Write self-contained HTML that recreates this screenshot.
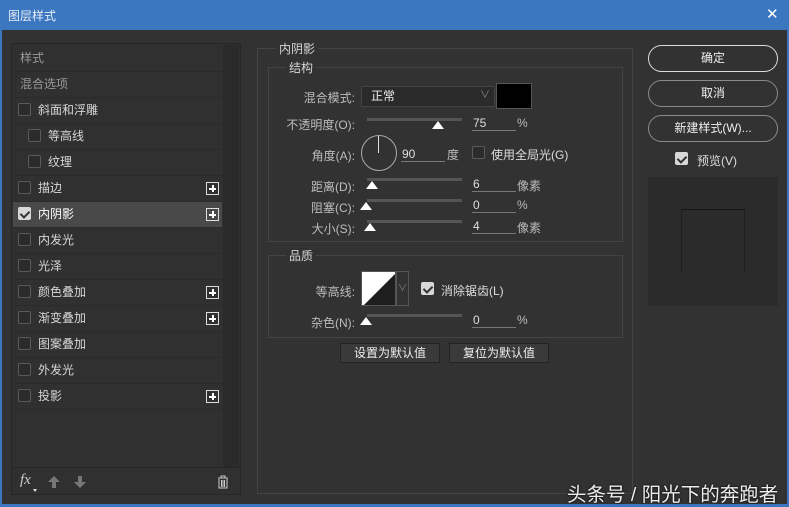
<!DOCTYPE html>
<html><head><meta charset="utf-8"><style>
*{margin:0;padding:0;box-sizing:border-box}
body{width:789px;height:507px;overflow:hidden;background:#3b76c0;font-family:"Liberation Sans","Noto Sans CJK SC",sans-serif;font-size:12px;color:#d6d6d6;position:relative}
.a{position:absolute}
#win{left:2px;top:30px;width:785px;height:474px;background:#323232}
.row{position:absolute;left:13px;width:209px;height:26px;border-bottom:1px solid #2a2a2a;line-height:25px}
.cb{position:absolute;width:13px;height:13px;border:1px solid #5a5a5a;background:#2b2b2b;border-radius:2px}
.cbk{background:#d8d8d8;border-color:#d8d8d8}
.cbk:after{content:"";position:absolute;left:3px;top:1px;width:4px;height:7px;border:solid #333;border-width:0 2px 2px 0;transform:rotate(45deg)}
.plus{position:absolute;left:193px;top:6px;width:13px;height:13px;border:1px solid #ddd}
.plus:before{content:"";position:absolute;left:2px;top:5px;width:7px;height:1px;background:#fff;border-top:1px solid #fff}
.plus:after{content:"";position:absolute;left:5px;top:2px;width:1px;height:7px;background:#fff;border-left:1px solid #fff}
.grp{position:absolute;border:1px solid #444}
.lbl{position:absolute;text-align:right;color:#bdbdbd}
.track{position:absolute;height:3px;background:#555}
.thumb{position:absolute;width:0;height:0;border-left:6px solid transparent;border-right:6px solid transparent;border-bottom:8px solid #fff}
.inp{position:absolute;width:44px;border-bottom:1px solid #777;color:#ddd;padding-left:1px;height:15px;line-height:14px}
.btn{position:absolute;border:1px solid #8a8a8a;border-radius:14px;text-align:center;color:#eee;line-height:25px}
.sbtn{position:absolute;height:20px;background:#3a3a3a;border:1px solid #222;text-align:center;color:#eee;line-height:18px}
</style></head><body>
<div class="a" style="left:8px;top:7px;color:#e8eef8;font-size:12px">图层样式</div>
<div class="a" style="left:766px;top:5px;color:#fff;font-size:15px">✕</div>
<div id="win" class="a"></div>
<!-- left panel -->
<div class="a" style="left:11px;top:43px;width:230px;height:452px;border:1px solid #262626;background:#303030"></div>
<div class="a" style="left:223px;top:45px;width:16px;height:422px;background:#2a2a2a"></div>
<div class="row" style="top:46px;color:#999"><span style="margin-left:7px">样式</span></div>
<div class="row" style="top:72px;color:#999"><span style="margin-left:7px">混合选项</span></div>
<div class="row" style="top:98px"><div class="cb" style="left:5px;top:5px"></div><span style="margin-left:25px">斜面和浮雕</span></div>
<div class="row" style="top:124px"><div class="cb" style="left:15px;top:5px"></div><span style="margin-left:35px">等高线</span></div>
<div class="row" style="top:150px"><div class="cb" style="left:15px;top:5px"></div><span style="margin-left:35px">纹理</span></div>
<div class="row" style="top:176px"><div class="cb" style="left:5px;top:5px"></div><span style="margin-left:25px">描边</span><div class="plus"></div></div>
<div class="row" style="top:202px;background:#494949"><div class="cb cbk" style="left:5px;top:5px"></div><span style="margin-left:25px;color:#fff">内阴影</span><div class="plus"></div></div>
<div class="row" style="top:228px"><div class="cb" style="left:5px;top:5px"></div><span style="margin-left:25px">内发光</span></div>
<div class="row" style="top:254px"><div class="cb" style="left:5px;top:5px"></div><span style="margin-left:25px">光泽</span></div>
<div class="row" style="top:280px"><div class="cb" style="left:5px;top:5px"></div><span style="margin-left:25px">颜色叠加</span><div class="plus"></div></div>
<div class="row" style="top:306px"><div class="cb" style="left:5px;top:5px"></div><span style="margin-left:25px">渐变叠加</span><div class="plus"></div></div>
<div class="row" style="top:332px"><div class="cb" style="left:5px;top:5px"></div><span style="margin-left:25px">图案叠加</span></div>
<div class="row" style="top:358px"><div class="cb" style="left:5px;top:5px"></div><span style="margin-left:25px">外发光</span></div>
<div class="row" style="top:384px"><div class="cb" style="left:5px;top:5px"></div><span style="margin-left:25px">投影</span><div class="plus"></div></div>
<div class="a" style="left:12px;top:467px;width:228px;height:1px;background:#262626"></div>
<div class="a" style="left:20px;top:472px;font-style:italic;font-family:'Liberation Serif',serif;font-size:15px;color:#ccc">fx</div>
<div class="a" style="left:33px;top:489px;border-left:2px solid transparent;border-right:2px solid transparent;border-top:3px solid #ddd"></div>
<svg class="a" style="left:47px;top:475px" width="14" height="14"><path d="M7 1L13 7H9V13H5V7H1Z" fill="#777"/></svg>
<svg class="a" style="left:73px;top:475px" width="14" height="14"><path d="M7 13L13 7H9V1H5V7H1Z" fill="#777"/></svg>
<svg class="a" style="left:217px;top:475px" width="12" height="14"><path d="M1 3H11M4 3V1H8V3M2 4V13H10V4M4.5 5V12M6 5V12M7.5 5V12" stroke="#ccc" fill="none"/></svg>
<!-- middle -->
<div class="grp" style="left:257px;top:48px;width:376px;height:446px"></div>
<div class="a" style="left:276px;top:40px;background:#323232;padding:0 3px">内阴影</div>
<div class="grp" style="left:268px;top:67px;width:355px;height:175px"></div>
<div class="a" style="left:286px;top:59px;background:#323232;padding:0 3px">结构</div>
<div class="lbl" style="left:270px;top:89px;width:85px">混合模式:</div>
<div class="a" style="left:361px;top:86px;width:134px;height:21px;background:#2a2a2a;border:1px solid #444;padding-left:9px;line-height:19px;color:#eee">正常<span style="position:absolute;right:4px;top:-1px;color:#888;font-size:10px">∨</span></div>
<div class="a" style="left:496px;top:83px;width:36px;height:26px;background:#000;border:1px solid #555"></div>
<div class="lbl" style="left:260px;top:116px;width:95px">不透明度(O):</div>
<div class="track" style="left:367px;top:118px;width:95px"></div><div class="thumb" style="left:432px;top:121px"></div>
<div class="inp" style="left:472px;top:116px">75</div><div class="a" style="left:517px;top:116px;color:#bbb">%</div>
<div class="lbl" style="left:270px;top:147px;width:85px">角度(A):</div>
<div class="a" style="left:361px;top:135px;width:36px;height:36px;border:1px solid #aaa;border-radius:50%"></div>
<div class="a" style="left:378px;top:136px;width:1px;height:17px;background:#ddd"></div>
<div class="inp" style="left:401px;top:147px">90</div><div class="a" style="left:447px;top:146px;color:#bbb">度</div>
<div class="cb" style="left:472px;top:146px"></div><div class="a" style="left:491px;top:146px;color:#ddd">使用全局光(G)</div>
<div class="lbl" style="left:270px;top:178px;width:85px">距离(D):</div>
<div class="track" style="left:367px;top:178px;width:95px"></div><div class="thumb" style="left:366px;top:181px"></div>
<div class="inp" style="left:472px;top:177px">6</div><div class="a" style="left:517px;top:177px;color:#bbb">像素</div>
<div class="lbl" style="left:270px;top:199px;width:85px">阻塞(C):</div>
<div class="track" style="left:367px;top:199px;width:95px"></div><div class="thumb" style="left:360px;top:202px"></div>
<div class="inp" style="left:472px;top:198px">0</div><div class="a" style="left:517px;top:198px;color:#bbb">%</div>
<div class="lbl" style="left:270px;top:220px;width:85px">大小(S):</div>
<div class="track" style="left:367px;top:220px;width:95px"></div><div class="thumb" style="left:364px;top:223px"></div>
<div class="inp" style="left:472px;top:219px">4</div><div class="a" style="left:517px;top:219px;color:#bbb">像素</div>
<div class="grp" style="left:268px;top:255px;width:355px;height:83px"></div>
<div class="a" style="left:286px;top:247px;background:#323232;padding:0 3px">品质</div>
<div class="lbl" style="left:270px;top:283px;width:85px">等高线:</div>
<div class="a" style="left:361px;top:271px;width:35px;height:35px;background:#1e1e1e;border:1px solid #555;overflow:hidden"><svg width="35" height="35"><path d="M0 0H35L0 35Z" fill="#fff"/></svg></div>
<div class="a" style="left:396px;top:271px;width:13px;height:35px;border:1px solid #555;color:#888;font-size:9px;text-align:center;line-height:33px">∨</div>
<div class="cb cbk" style="left:421px;top:282px"></div><div class="a" style="left:441px;top:282px;color:#ddd">消除锯齿(L)</div>
<div class="lbl" style="left:270px;top:314px;width:85px">杂色(N):</div>
<div class="track" style="left:367px;top:314px;width:95px"></div><div class="thumb" style="left:360px;top:317px"></div>
<div class="inp" style="left:472px;top:313px">0</div><div class="a" style="left:517px;top:313px;color:#bbb">%</div>
<div class="sbtn" style="left:340px;top:343px;width:100px">设置为默认值</div>
<div class="sbtn" style="left:449px;top:343px;width:100px">复位为默认值</div>
<!-- right -->
<div class="btn" style="left:648px;top:45px;width:130px;height:27px;border-color:#ddd">确定</div>
<div class="btn" style="left:648px;top:80px;width:130px;height:27px">取消</div>
<div class="btn" style="left:648px;top:115px;width:130px;height:27px">新建样式(W)...</div>
<div class="cb cbk" style="left:675px;top:152px"></div><div class="a" style="left:697px;top:152px;color:#ddd">预览(V)</div>
<div class="a" style="left:648px;top:177px;width:130px;height:129px;background:#2b2b2b"></div>
<div class="a" style="left:681px;top:209px;width:64px;height:63px;border-top:1px solid #151515;border-left:1px solid #1f1f1f;border-right:1px solid #1f1f1f"></div>
<div class="a" style="left:567px;top:478px;color:#eee;font-size:19.5px;text-shadow:0 0 2px #000;white-space:nowrap">头条号 / 阳光下的奔跑者</div>
</body></html>
